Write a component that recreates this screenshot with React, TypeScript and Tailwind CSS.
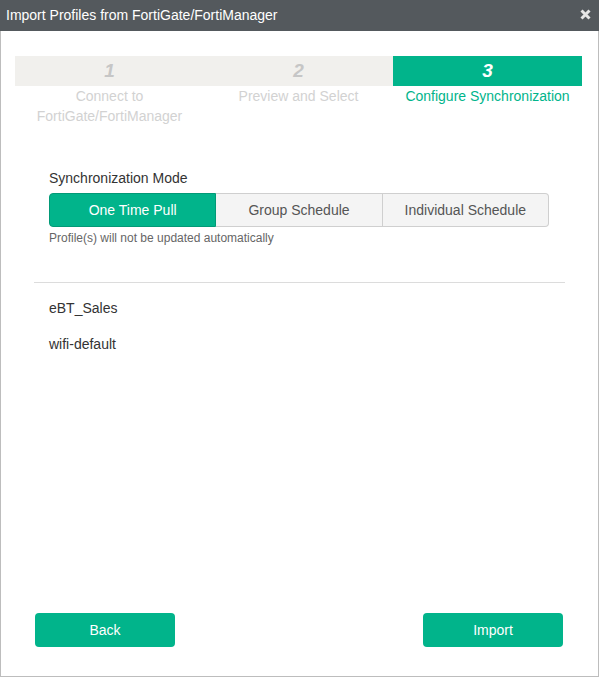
import React from "react";

export default function App() {
  const steps = [
    { n: "1", label: ["Connect to", "FortiGate/FortiManager"], active: false },
    { n: "2", label: ["Preview and Select"], active: false },
    { n: "3", label: ["Configure Synchronization"], active: true },
  ];
  return (
    <div
      className="w-[599px] h-[677px] border border-t-0 border-[#bdbdbd] bg-white flex flex-col text-[14px]"
      style={{ fontFamily: '"Liberation Sans", Arial, sans-serif' }}
    >
      <div className="h-[31px] bg-[#54595d] flex items-center justify-between pl-[6px] pr-[8px] -mx-px">
        <span className="text-white text-[14px]">Import Profiles from FortiGate/FortiManager</span>
        <svg width="11" height="11" viewBox="0 0 11 11" className="mt-[-3px]">
          <path d="M1.5 1.5 L9.5 9.5 M9.5 1.5 L1.5 9.5" stroke="#e6e6e6" strokeWidth="3" strokeLinecap="butt" />
        </svg>
      </div>

      <div className="flex-1 flex flex-col">
        <div className="mt-[25px] ml-[14px] w-[567px] grid grid-cols-3">
          {steps.map((s) => (
            <div key={s.n} className="flex flex-col items-center">
              <div
                className={`w-full h-[30px] flex items-center justify-center text-[19px] font-bold italic ${
                  s.active ? "bg-[#01b48b] text-white" : "bg-[#f1f0ed] text-[#c6c6c6]"
                }`}
              >
                {s.n}
              </div>
              <div
                className={`text-center leading-[20px] ${s.active ? "text-[#01b48b]" : "text-[#d2d2d2]"}`}
              >
                {s.label.map((l) => (
                  <div key={l}>{l}</div>
                ))}
              </div>
            </div>
          ))}
        </div>

        <div className="mt-[42px] px-[48px]">
          <div className="text-[#333] leading-[20px]">Synchronization Mode</div>
          <div className="mt-[5px] flex w-[500px] h-[34px]">
            <div className="flex-1 flex items-center justify-center bg-[#01b48b] text-white rounded-l-[4px] border border-[#029a77]">
              One Time Pull
            </div>
            <div className="flex-1 flex items-center justify-center bg-[#f4f4f4] text-[#555] border-y border-r border-[#cfcfcf]">
              Group Schedule
            </div>
            <div className="flex-1 flex items-center justify-center bg-[#f4f4f4] text-[#555] border-y border-r border-[#cfcfcf] rounded-r-[4px]">
              Individual Schedule
            </div>
          </div>
          <div className="mt-[3px] text-[12px] leading-[16px] text-[#666]">
            Profile(s) will not be updated automatically
          </div>
        </div>

        <div className="mt-[36px] ml-[33px] w-[531px] h-px bg-[#dcdcdc]" />

        <div className="mt-[15px] px-[48px] text-[#333] leading-[20px] flex flex-col gap-[16px]">
          <div>eBT_Sales</div>
          <div>wifi-default</div>
        </div>
      </div>

      <div className="flex justify-between pl-[34px] pr-[35px] pb-[29px]">
        <button className="w-[140px] h-[34px] rounded-[4px] bg-[#01b48b] text-white text-[14px]">Back</button>
        <button className="w-[140px] h-[34px] rounded-[4px] bg-[#01b48b] text-white text-[14px]">Import</button>
      </div>
    </div>
  );
}
